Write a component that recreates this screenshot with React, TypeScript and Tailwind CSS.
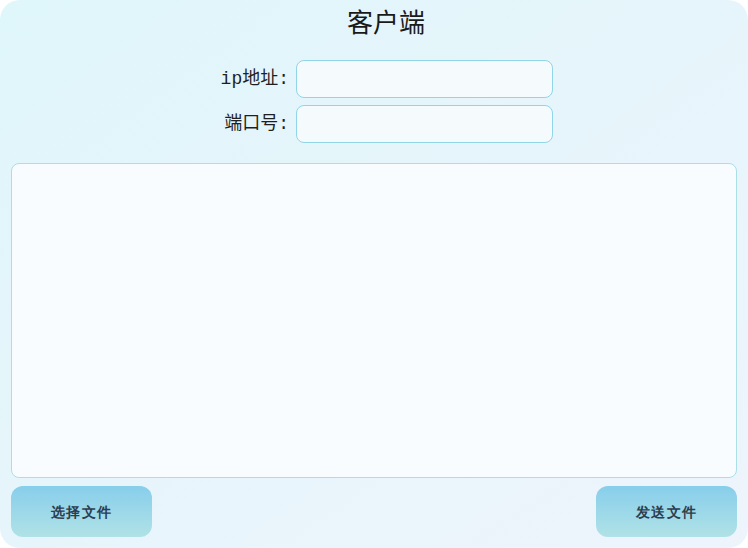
import React from 'react';

const mono = { fontFamily: '"Liberation Mono", "Noto Sans CJK SC", monospace' };

interface FieldRowProps {
  label: string;
}

const FieldRow: React.FC<FieldRowProps> = ({ label }) => (
  <div className="flex items-center">
    <div className="w-[95px] pr-[7px] text-right text-[18px] text-[#1f1f1f]" style={mono}>
      {label}
    </div>
    <input
      type="text"
      className="w-[257px] h-[38px] rounded-[8px] border border-[#90d5e8] bg-[#f5fbfd] px-2 outline-none"
    />
  </div>
);

const ActionButton: React.FC<{ text: string }> = ({ text }) => (
  <button className="w-[141px] h-[51px] rounded-[12px] bg-gradient-to-b from-[#87ceeb] to-[#b0e2e6] text-[14px] font-bold text-[#2c3e50] tracking-[1.5px]">
    {text}
  </button>
);

export default function App() {
  return (
    <div className="w-[748px] h-[548px] bg-white">
      <div className="w-full h-full rounded-[20px] bg-gradient-to-br from-[#dff6fa] to-[#eef4fc] flex flex-col px-[11px] pb-[11px]">
        <div className="h-[50px] pl-[24px] flex items-center justify-center text-[26px] text-[#1a1a1a]" style={mono}>
          客户端
        </div>
        <div className="mt-[10px] flex flex-col items-center gap-[7px] pl-[6px]">
          <FieldRow label="ip地址:" />
          <FieldRow label="端口号:" />
        </div>
        <textarea className="mt-[20px] h-[315px] w-full resize-none rounded-[8px] border border-[#abdfe8] bg-[#f8fcfe] outline-none" />
        <div className="mt-[8px] flex justify-between">
          <ActionButton text="选择文件" />
          <ActionButton text="发送文件" />
        </div>
      </div>
    </div>
  );
}
